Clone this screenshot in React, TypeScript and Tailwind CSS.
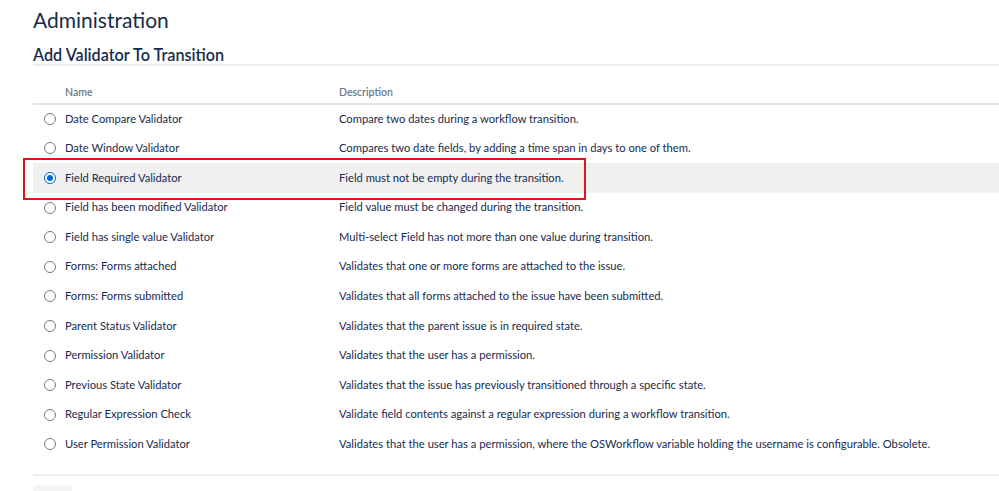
const validators = [
  { name: 'Date Compare Validator', desc: 'Compare two dates during a workflow transition.' },
  { name: 'Date Window Validator', desc: 'Compares two date fields, by adding a time span in days to one of them.' },
  { name: 'Field Required Validator', desc: 'Field must not be empty during the transition.', selected: true },
  { name: 'Field has been modified Validator', desc: 'Field value must be changed during the transition.' },
  { name: 'Field has single value Validator', desc: 'Multi-select Field has not more than one value during transition.' },
  { name: 'Forms: Forms attached', desc: 'Validates that one or more forms are attached to the issue.' },
  { name: 'Forms: Forms submitted', desc: 'Validates that all forms attached to the issue have been submitted.' },
  { name: 'Parent Status Validator', desc: 'Validates that the parent issue is in required state.' },
  { name: 'Permission Validator', desc: 'Validates that the user has a permission.' },
  { name: 'Previous State Validator', desc: 'Validates that the issue has previously transitioned through a specific state.' },
  { name: 'Regular Expression Check', desc: 'Validate field contents against a regular expression during a workflow transition.' },
  {
    name: 'User Permission Validator',
    desc: 'Validates that the user has a permission, where the OSWorkflow variable holding the username is configurable. Obsolete.',
  },
]

function Radio({ checked }: { checked?: boolean }) {
  if (checked) {
    return (
      <span className="flex h-[12px] w-[12px] items-center justify-center rounded-full border border-[#0065d6] bg-white">
        <span className="h-[6px] w-[6px] rounded-full bg-[#0065d6]" />
      </span>
    )
  }
  return <span className="block h-[12px] w-[12px] rounded-full border border-[#7a7a7a] bg-white" />
}

export default function App() {
  return (
    <div className="min-h-[491px] overflow-hidden bg-white pl-[33px] pt-[6px] font-['Lato',sans-serif] text-[#172b4d]">
      <h1 className="text-[21px] leading-[28px] font-normal">Administration</h1>
      <h2 className="mt-[12px] border-b-2 border-[#ebecf0] text-[16.2px] leading-[18px] font-semibold">
        Add Validator To Transition
      </h2>

      <table className="mt-[16px] w-[1100px] border-collapse text-[11.2px]">
        <thead>
          <tr className="border-b-2 border-[#e4e5ea] text-left text-[10.5px] font-semibold text-[#6b778c]">
            <th className="w-[32px] p-0" />
            <th className="h-[22px] w-[274px] p-0 font-semibold">Name</th>
            <th className="p-0 font-semibold">Description</th>
          </tr>
        </thead>
        <tbody>
          {validators.map((v) => (
            <tr key={v.name} className={v.selected ? 'relative bg-[#f0f0f0]' : ''}>
              <td className="h-[29.6px] p-0 pl-[11px] align-middle">
                <Radio checked={v.selected} />
              </td>
              <td className="p-0 align-middle">{v.name}</td>
              <td className="relative p-0 align-middle">
                {v.desc}
                {v.selected ? (
                  <span className="pointer-events-none absolute top-[-5px] bottom-[-7px] left-[-316px] w-[563px] border-2 border-[#e8101a]" />
                ) : null}
              </td>
            </tr>
          ))}
        </tbody>
      </table>

      <div className="mt-[15px] h-[2px] bg-[#ebecf0]" />
      <div className="mt-[9px] h-[20px] w-[39px] rounded-[3px] bg-[#f4f5f7]" />
    </div>
  )
}
